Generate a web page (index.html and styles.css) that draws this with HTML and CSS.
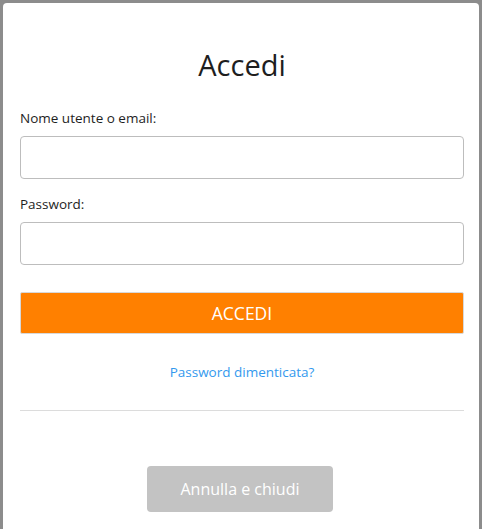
FILE: index.html
```html
<!DOCTYPE html>
<html lang="it">
<head>
<meta charset="utf-8">
<title>Accedi</title>
<link rel="stylesheet" href="styles.css">
</head>
<body>
<div class="modal">
  <h1 class="title">Accedi</h1>
  <form class="form">
    <label class="label" for="user">Nome utente o email:</label>
    <input class="input" id="user" type="text">
    <label class="label label-second" for="pass">Password:</label>
    <input class="input" id="pass" type="password">
    <button class="btn-primary" type="button">ACCEDI</button>
  </form>
  <div class="forgot"><a class="link" href="#">Password dimenticata?</a></div>
  <hr class="divider">
  <div class="footer"><button class="btn-cancel" type="button">Annulla e chiudi</button></div>
</div>
</body>
</html>
```

FILE: styles.css
```css
html, body {
  margin: 0;
  padding: 0;
  height: 100%;
}
body {
  background: #8c8c8c;
  font-family: "Open Sans", "DejaVu Sans", sans-serif;
  color: #222;
  padding: 3px;
  box-sizing: border-box;
}
.modal {
  background: #fff;
  border-radius: 4px;
  height: 529px;
  box-sizing: border-box;
  padding: 0 15px 0 17px;
}
.title {
  margin: 0;
  padding-top: 42px;
  font-size: 29px;
  line-height: 40px;
  font-weight: 400;
  text-align: center;
  color: #1e1e1e;
}
.form {
  display: flex;
  flex-direction: column;
  margin-top: 23px;
}
.label {
  font-size: 13.5px;
  line-height: 20px;
  color: #1e1e1e;
  margin-bottom: 8px;
}
.label-second {
  margin-top: 15px;
}
.input {
  height: 43px;
  box-sizing: border-box;
  border: 1px solid #bdbdbd;
  border-radius: 4px;
  margin: 0;
  padding: 6px 10px;
  font: inherit;
}
.btn-primary {
  margin-top: 27px;
  height: 42px;
  background: #ff8000;
  color: #fff;
  border: 1px solid #d8d8d8;
  border-radius: 2px;
  font-family: inherit;
  font-size: 17.5px;
  cursor: pointer;
}
.forgot {
  margin-top: 28px;
  text-align: center;
  font-size: 13.5px;
  line-height: 20px;
}
.link {
  color: #3399ee;
  text-decoration: none;
}
.divider {
  margin: 28px 0 0;
  border: 0;
  border-top: 1px solid #dcdcdc;
  height: 0;
}
.footer {
  display: flex;
  justify-content: center;
  margin-top: 55px;
  padding-right: 4px;
}
.btn-cancel {
  width: 186px;
  height: 46px;
  background: #c3c3c3;
  color: #fff;
  border: 0;
  border-radius: 4px;
  font-family: inherit;
  font-size: 16px;
}
```
